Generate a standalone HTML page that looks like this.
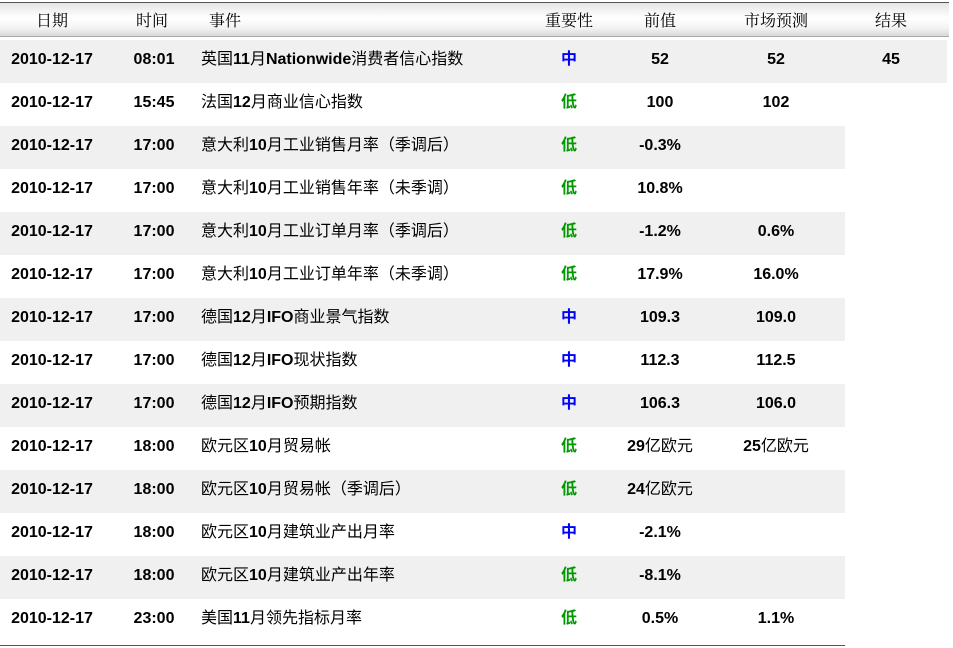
<!DOCTYPE html>
<html><head><meta charset="utf-8"><style>
body{margin:0;width:953px;height:648px;background:#fff;position:relative;overflow:hidden;font-family:"Liberation Sans","Noto Sans CJK SC",sans-serif;color:#000}
.hdr{position:absolute;left:0;top:2px;width:949px;height:33px;border-top:1px solid #555;border-bottom:1px solid #aaa;background:linear-gradient(#e4e4e4,#fff 45%,#f4f4f4 75%,#d8d8d8)}
.h{position:absolute;top:0;line-height:33px;font-family:"Noto Serif CJK SC","Liberation Serif",serif;font-size:16px;transform:translateX(-50%);white-space:nowrap}
.row{position:absolute;left:0;height:43px;width:845px}
.g{background:#f0f0f0}
.row span{line-height:40px}
.c{position:absolute;top:0;font-size:16px;font-weight:bold;white-space:nowrap;transform:translateX(-50%)}
.e{position:absolute;top:0;left:201px;font-size:16px;white-space:nowrap}
.e b{font-weight:bold}
.n{font-weight:normal}
.m{color:#0000ff}.l{color:#009900}
.line{position:absolute;left:0;top:645px;width:845px;height:1px;background:#555}
</style></head><body>
<div class="hdr">
<span class="h" style="left:52px">日期</span>
<span class="h" style="left:152px">时间</span>
<span class="h" style="left:225px">事件</span>
<span class="h" style="left:569px">重要性</span>
<span class="h" style="left:660px">前值</span>
<span class="h" style="left:776px">市场预测</span>
<span class="h" style="left:891px">结果</span>
</div>

<div class="row g" style="top:40px;width:947px"><span class="c" style="left:52px">2010-12-17</span><span class="c" style="left:154px">08:01</span><span class="e">英国<b>11</b>月<b>Nationwide</b>消费者信心指数</span><span class="c m" style="left:569px">中</span><span class="c" style="left:660px">52</span><span class="c" style="left:776px">52</span><span class="c" style="left:891px">45</span></div>
<div class="row" style="top:83px"><span class="c" style="left:52px">2010-12-17</span><span class="c" style="left:154px">15:45</span><span class="e">法国<b>12</b>月商业信心指数</span><span class="c l" style="left:569px">低</span><span class="c" style="left:660px">100</span><span class="c" style="left:776px">102</span></div>
<div class="row g" style="top:126px"><span class="c" style="left:52px">2010-12-17</span><span class="c" style="left:154px">17:00</span><span class="e">意大利<b>10</b>月工业销售月率（季调后）</span><span class="c l" style="left:569px">低</span><span class="c" style="left:660px">-0.3%</span></div>
<div class="row" style="top:169px"><span class="c" style="left:52px">2010-12-17</span><span class="c" style="left:154px">17:00</span><span class="e">意大利<b>10</b>月工业销售年率（未季调）</span><span class="c l" style="left:569px">低</span><span class="c" style="left:660px">10.8%</span></div>
<div class="row g" style="top:212px"><span class="c" style="left:52px">2010-12-17</span><span class="c" style="left:154px">17:00</span><span class="e">意大利<b>10</b>月工业订单月率（季调后）</span><span class="c l" style="left:569px">低</span><span class="c" style="left:660px">-1.2%</span><span class="c" style="left:776px">0.6%</span></div>
<div class="row" style="top:255px"><span class="c" style="left:52px">2010-12-17</span><span class="c" style="left:154px">17:00</span><span class="e">意大利<b>10</b>月工业订单年率（未季调）</span><span class="c l" style="left:569px">低</span><span class="c" style="left:660px">17.9%</span><span class="c" style="left:776px">16.0%</span></div>
<div class="row g" style="top:298px"><span class="c" style="left:52px">2010-12-17</span><span class="c" style="left:154px">17:00</span><span class="e">德国<b>12</b>月<b>IFO</b>商业景气指数</span><span class="c m" style="left:569px">中</span><span class="c" style="left:660px">109.3</span><span class="c" style="left:776px">109.0</span></div>
<div class="row" style="top:341px"><span class="c" style="left:52px">2010-12-17</span><span class="c" style="left:154px">17:00</span><span class="e">德国<b>12</b>月<b>IFO</b>现状指数</span><span class="c m" style="left:569px">中</span><span class="c" style="left:660px">112.3</span><span class="c" style="left:776px">112.5</span></div>
<div class="row g" style="top:384px"><span class="c" style="left:52px">2010-12-17</span><span class="c" style="left:154px">17:00</span><span class="e">德国<b>12</b>月<b>IFO</b>预期指数</span><span class="c m" style="left:569px">中</span><span class="c" style="left:660px">106.3</span><span class="c" style="left:776px">106.0</span></div>
<div class="row" style="top:427px"><span class="c" style="left:52px">2010-12-17</span><span class="c" style="left:154px">18:00</span><span class="e">欧元区<b>10</b>月贸易帐</span><span class="c l" style="left:569px">低</span><span class="c" style="left:660px">29<span class="n">亿欧元</span></span><span class="c" style="left:776px">25<span class="n">亿欧元</span></span></div>
<div class="row g" style="top:470px"><span class="c" style="left:52px">2010-12-17</span><span class="c" style="left:154px">18:00</span><span class="e">欧元区<b>10</b>月贸易帐（季调后）</span><span class="c l" style="left:569px">低</span><span class="c" style="left:660px">24<span class="n">亿欧元</span></span></div>
<div class="row" style="top:513px"><span class="c" style="left:52px">2010-12-17</span><span class="c" style="left:154px">18:00</span><span class="e">欧元区<b>10</b>月建筑业产出月率</span><span class="c m" style="left:569px">中</span><span class="c" style="left:660px">-2.1%</span></div>
<div class="row g" style="top:556px"><span class="c" style="left:52px">2010-12-17</span><span class="c" style="left:154px">18:00</span><span class="e">欧元区<b>10</b>月建筑业产出年率</span><span class="c l" style="left:569px">低</span><span class="c" style="left:660px">-8.1%</span></div>
<div class="row" style="top:599px"><span class="c" style="left:52px">2010-12-17</span><span class="c" style="left:154px">23:00</span><span class="e">美国<b>11</b>月领先指标月率</span><span class="c l" style="left:569px">低</span><span class="c" style="left:660px">0.5%</span><span class="c" style="left:776px">1.1%</span></div>
<div class="line"></div>
</body></html>
